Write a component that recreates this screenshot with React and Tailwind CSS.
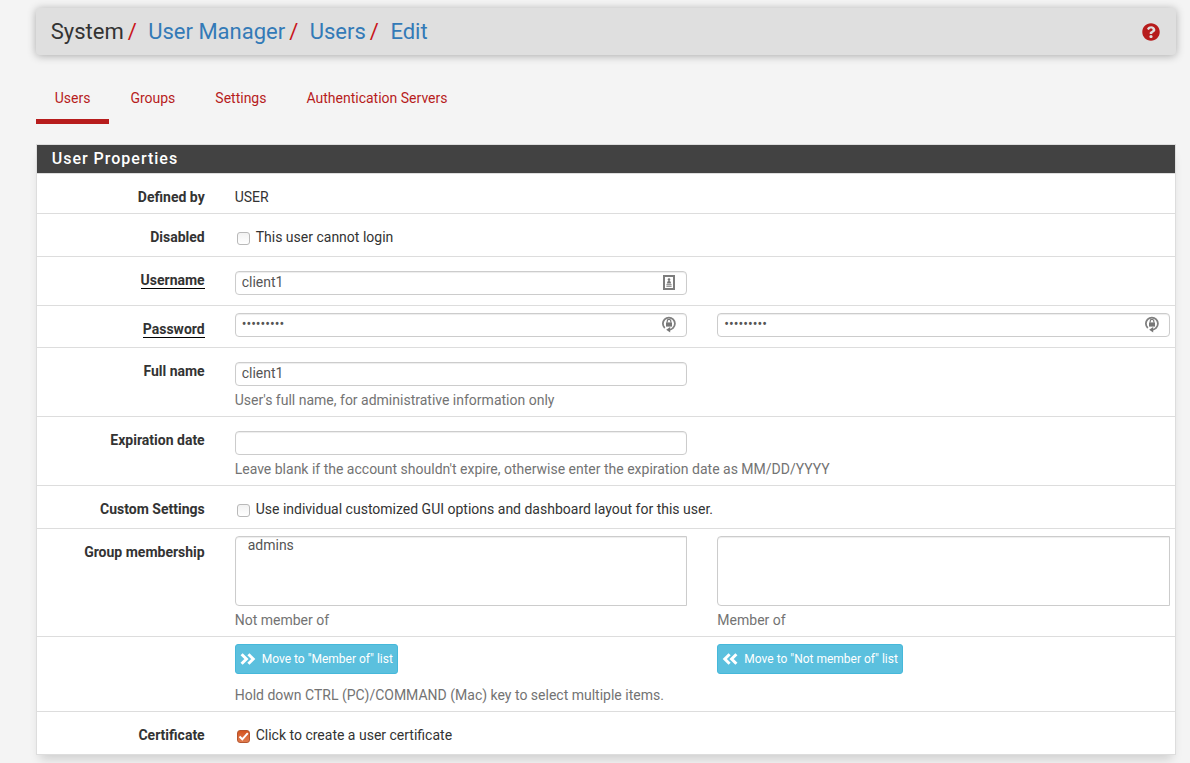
import React, { useState } from 'react';
import { FaQuestionCircle } from 'react-icons/fa';

const inputClass =
  'block w-full h-6 px-1.5 pb-0.5 text-sm leading-5 text-[#555] bg-white border border-[#ccc] rounded shadow-[inset_0_1px_1px_rgba(0,0,0,0.075)] outline-none focus:border-[#66afe9]';

const selectClass =
  'block w-full h-[70px] pl-3 text-sm text-[#555] bg-white border border-[#ccc] rounded-l shadow-[inset_0_1px_1px_rgba(0,0,0,0.075)] outline-none overflow-hidden';

const buttonClass =
  'inline-flex items-center gap-1.5 h-[30px] px-1 text-xs text-white bg-[#5bc0de] hover:bg-[#31b0d5] border border-[#46b8da] rounded-[3px]';

const breadcrumb = ['User Manager', 'Users', 'Edit'];
const tabs = ['Users', 'Groups', 'Settings', 'Authentication Servers'];

const Row = ({ label, htmlFor, required, children }) => (
  <div className="flex gap-[30px] pr-[5px] border-b border-[#ddd] last:border-b-0">
    <label htmlFor={htmlFor} className="w-[168px] shrink-0 pt-[13px] text-right font-bold">
      <span className={required ? 'border-b border-black' : ''}>{label}</span>
    </label>
    <div className="flex-1 min-w-0">{children}</div>
  </div>
);

const Columns = ({ children }) => <div className="grid grid-cols-2 gap-[30px]">{children}</div>;

const Help = ({ children }) => <p className="mt-1 text-[#737373]">{children}</p>;

const Checkbox = ({ id, checked, onChange, children }) => (
  <label className="flex items-center gap-1.5 pt-[13px] pb-[9px] pl-0.5">
    <span className="relative mt-[3px] block size-[13px]">
      <input
        id={id}
        type="checkbox"
        checked={checked}
        onChange={(e) => onChange(e.target.checked)}
        className="block size-[13px] appearance-none rounded-[3px] border border-[#b9b9b9] bg-linear-to-b from-[#f2f2f2] to-white checked:border-[#b5562f] checked:from-[#d4551f] checked:to-[#e07b4e]"
      />
      {checked && (
        <svg viewBox="0 0 13 13" className="pointer-events-none absolute inset-0 size-[13px]" fill="none" stroke="#fff" strokeWidth="2">
          <path d="M2.5 6.5 L5.3 9.3 L10.8 3.2" />
        </svg>
      )}
    </span>
    {children}
  </label>
);

const CardIcon = () => (
  <svg viewBox="0 0 12 15" className="pointer-events-none absolute right-3 top-1 h-[15px] w-3">
    <rect x="1" y="1" width="10" height="13" fill="#fff" stroke="#7d7d7d" strokeWidth="2" />
    <circle cx="6" cy="4.6" r="1.3" fill="#777" />
    <path d="M3.8 8.4 Q4 5.8 6 5.8 Q8 5.8 8.2 8.4 Z" fill="#777" />
    <path d="M3.4 9.6 H8.6 M3.4 11.4 H8.6" stroke="#999" strokeWidth="1.1" />
  </svg>
);

const LockIcon = () => (
  <svg viewBox="0 0 14 17" className="pointer-events-none absolute right-[11px] top-[3px] h-[17px] w-3.5" fill="none">
    <path d="M2.8 12 A6 6 0 1 1 11 12 Q9.8 13.4 7.4 13.8" stroke="#808080" strokeWidth="1.8" />
    <path d="M8.2 11 V16.6 L4.2 13.8 Z" fill="#777" />
    <rect x="4" y="6.4" width="6" height="4.2" fill="#777" />
    <path d="M5.2 6.6 V5.2 A1.8 1.8 0 0 1 8.8 5.2 V6.6" stroke="#777" strokeWidth="1.2" />
  </svg>
);

const DoubleChevron = ({ left }) => (
  <svg viewBox="0 0 16 12" className={left ? 'h-3 w-4 rotate-180' : 'h-3 w-4'} fill="none" stroke="#fff" strokeWidth="3">
    <path d="M1.6 1.2 L6.4 6 L1.6 10.8 M8.4 1.2 L13.2 6 L8.4 10.8" />
  </svg>
);

const App = () => {
  const [disabled, setDisabled] = useState(false);
  const [custom, setCustom] = useState(false);
  const [cert, setCert] = useState(true);

  return (
    <div className="min-h-screen bg-[#f4f4f4] pt-2 pr-3.5 pl-[3%] text-sm text-[#333] font-[Roboto,sans-serif]">
      <header className="flex h-[47px] items-center justify-between rounded bg-[#dfdfdf] pr-4 pl-[15px] shadow-[0_1px_8px_rgba(0,0,0,0.3)]">
        <ol className="flex text-[22px] leading-6">
          <li>System</li>
          {breadcrumb.map((item) => (
            <li key={item}>
              <span className="pl-1 pr-1.5 text-[#c9151b]">/ </span>
              <a href="#" className="text-[#337ab7]">{item}</a>
            </li>
          ))}
        </ol>
        <a href="#" aria-label="Help" className="text-[#b71c1c]">
          <FaQuestionCircle size={18} />
        </a>
      </header>

      <nav className="mt-[19px] flex gap-0.5">
        {tabs.map((tab, i) => (
          <a
            key={tab}
            href="#"
            className={`border-b-[5px] px-[19px] pt-3.5 pb-[11px] text-[#b71c1c] ${i === 0 ? 'border-[#b71c1c]' : 'border-transparent'}`}
          >
            {tab}
          </a>
        ))}
      </nav>

      <form
        onSubmit={(e) => e.preventDefault()}
        className="mt-5 border border-[#ddd] bg-white shadow-[0_8px_10px_-4px_rgba(0,0,0,0.16)]"
      >
        <h2 className="border-b border-[#ddd] bg-[#424242] pt-0.5 pb-0.5 pl-[15px] text-base font-medium tracking-[1px] text-white">
          User Properties
        </h2>

        <Row label="Defined by">
          <p className="pt-[13px] pb-1.5">USER</p>
        </Row>

        <Row label="Disabled" htmlFor="disabled">
          <Checkbox id="disabled" checked={disabled} onChange={setDisabled}>
            This user cannot login
          </Checkbox>
        </Row>

        <Row label="Username" htmlFor="username" required>
          <div className="pt-3.5 pb-2.5">
            <Columns>
              <div className="relative">
                <input id="username" type="text" defaultValue="client1" className={inputClass} />
                <CardIcon />
              </div>
            </Columns>
          </div>
        </Row>

        <Row label="Password" htmlFor="password" required>
          <div className="pt-[7px] pb-2.5">
            <Columns>
              <div className="relative">
                <input id="password" type="password" defaultValue="password1" className={inputClass} />
                <LockIcon />
              </div>
              <div className="relative">
                <input type="password" aria-label="Confirm password" defaultValue="password1" className={inputClass} />
                <LockIcon />
              </div>
            </Columns>
          </div>
        </Row>

        <Row label="Full name" htmlFor="fullname">
          <div className="pt-3.5 pb-1.5">
            <Columns>
              <input id="fullname" type="text" defaultValue="client1" className={inputClass} />
            </Columns>
            <Help>User's full name, for administrative information only</Help>
          </div>
        </Row>

        <Row label="Expiration date" htmlFor="expires">
          <div className="pt-3.5 pb-1.5">
            <Columns>
              <input id="expires" type="text" className={inputClass} />
            </Columns>
            <Help>Leave blank if the account shouldn't expire, otherwise enter the expiration date as MM/DD/YYYY</Help>
          </div>
        </Row>

        <Row label="Custom Settings" htmlFor="custom">
          <Checkbox id="custom" checked={custom} onChange={setCustom}>
            Use individual customized GUI options and dashboard layout for this user.
          </Checkbox>
        </Row>

        <Row label="Group membership" htmlFor="notmember">
          <div className="pt-[7px] pb-1.5">
            <Columns>
              <div>
                <select id="notmember" multiple className={selectClass}>
                  <option>admins</option>
                </select>
                <Help>Not member of</Help>
              </div>
              <div>
                <select aria-label="Member of" multiple className={selectClass} />
                <Help>Member of</Help>
              </div>
            </Columns>
          </div>
        </Row>

        <Row>
          <div className="pt-[7px] pb-1.5">
            <Columns>
              <div>
                <button type="button" className={buttonClass}>
                  <DoubleChevron />
                  Move to "Member of" list
                </button>
              </div>
              <div>
                <button type="button" className={buttonClass}>
                  <DoubleChevron left />
                  Move to "Not member of" list
                </button>
              </div>
            </Columns>
            <p className="mt-[11px] text-[#737373]">
              Hold down CTRL (PC)/COMMAND (Mac) key to select multiple items.
            </p>
          </div>
        </Row>

        <Row label="Certificate" htmlFor="cert">
          <Checkbox id="cert" checked={cert} onChange={setCert}>
            Click to create a user certificate
          </Checkbox>
        </Row>
      </form>
    </div>
  );
};

export default App;
